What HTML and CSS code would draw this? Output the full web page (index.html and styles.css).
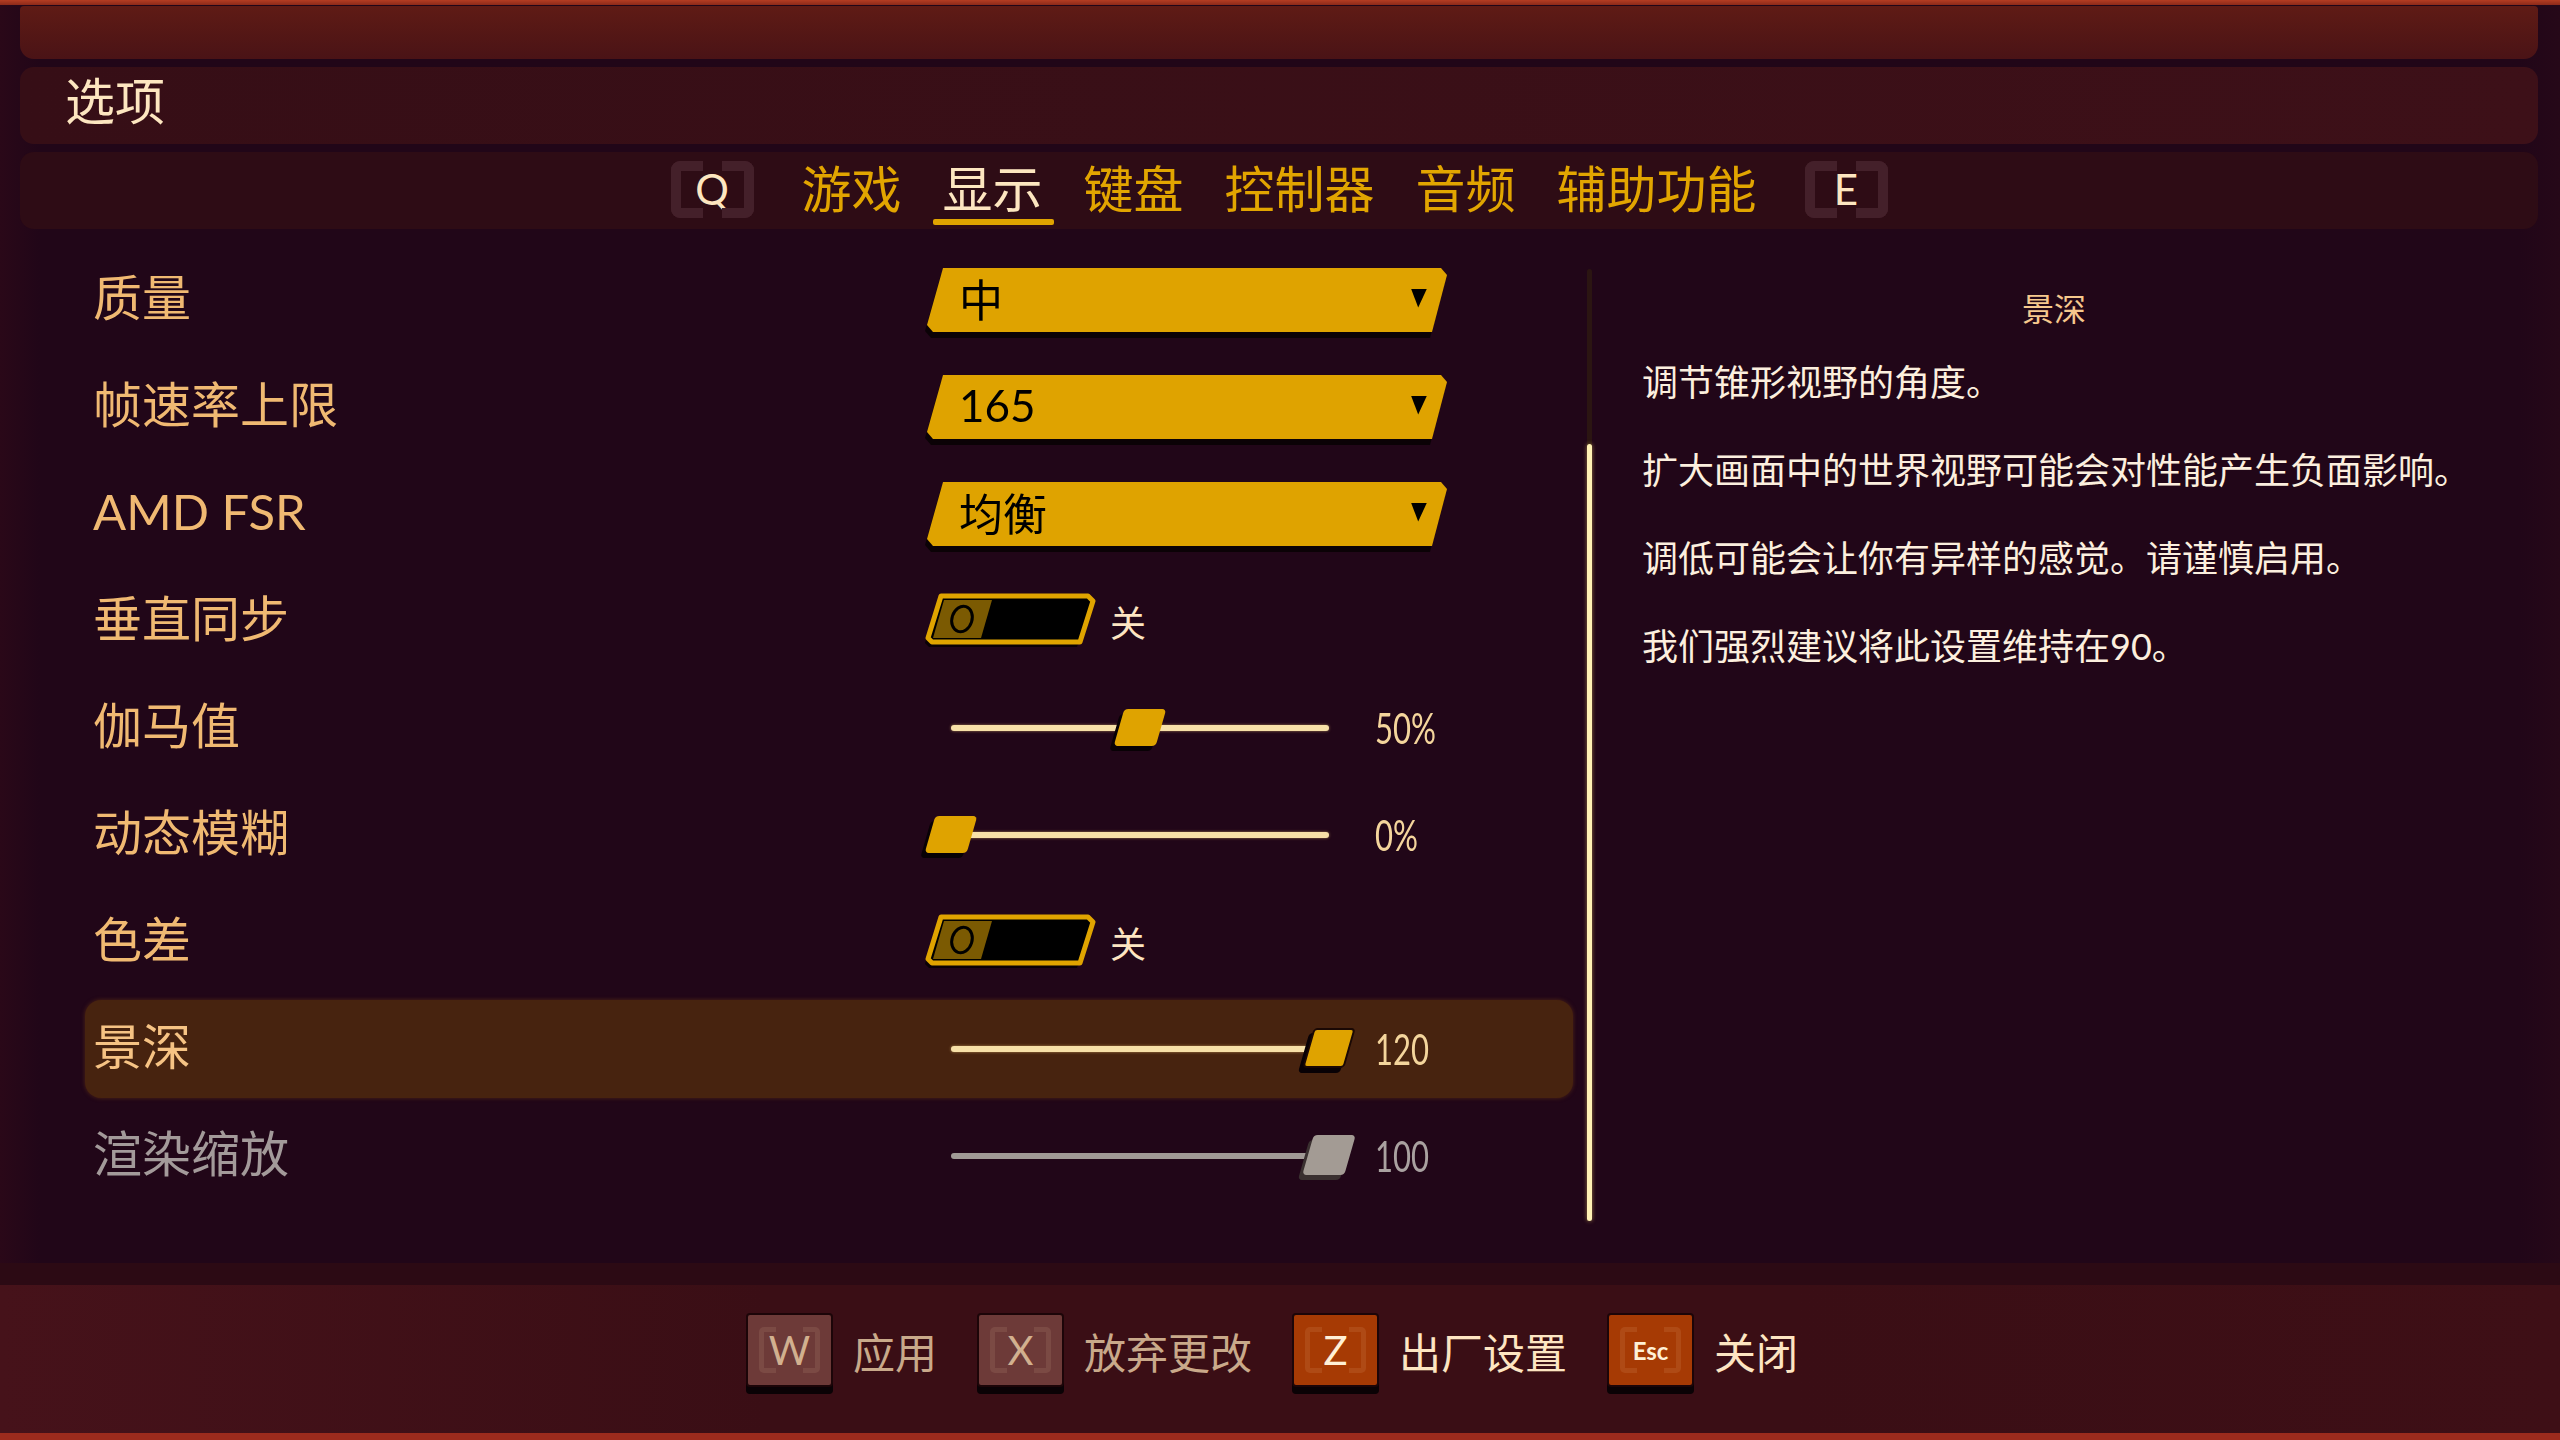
FILE: index.html
```html
<!DOCTYPE html>
<html lang="zh-CN">
<head>
    <meta charset="UTF-8">
    <title>选项</title>
    <link rel="stylesheet" href="styles.css">
</head>
<body>
<div class="screen">
    <div class="top-line"></div>

    <div class="header">
        <div class="banner"></div>
        <div class="title-bar">选项</div>
        <div class="tab-bar">
            <span class="key-hint">Q</span>
            <span class="tab">游戏</span>
            <span class="tab active">显示</span>
            <span class="tab">键盘</span>
            <span class="tab">控制器</span>
            <span class="tab">音频</span>
            <span class="tab">辅助功能</span>
            <span class="key-hint">E</span>
        </div>
    </div>

    <div class="main">
        <div class="settings">
            <div class="row">
                <span class="label">质量</span>
                <div class="dropdown"><div class="dropdown-face"><span>中</span><span class="arrow"></span></div></div>
            </div>
            <div class="row">
                <span class="label">帧速率上限</span>
                <div class="dropdown"><div class="dropdown-face"><span>165</span><span class="arrow"></span></div></div>
            </div>
            <div class="row">
                <span class="label">AMD FSR</span>
                <div class="dropdown"><div class="dropdown-face"><span>均衡</span><span class="arrow"></span></div></div>
            </div>
            <div class="row">
                <span class="label">垂直同步</span>
                <div class="toggle">
                    <svg width="172" height="56" viewBox="0 0 172 56">
                        <polygon points="13,8 160,8 165,13 152,54 4,54 0,50" fill="#0a0105"/>
                        <polygon points="16,3 163,3 168,8 155,49 7,49 3,45" fill="#000" stroke="#e0a400" stroke-width="5" stroke-linejoin="round"/>
                        <polygon points="19,7 67,7 56,45 8,45" fill="#7b5a02"/>
                        <ellipse cx="37" cy="26" rx="10" ry="13" transform="rotate(18 37 26)" fill="none" stroke="#000" stroke-width="3"/>
                    </svg>
                    <span>关</span>
                </div>
            </div>
            <div class="row">
                <span class="label">伽马值</span>
                <div class="slider-wrap">
                    <div class="slider">
                        <div class="slider-track"></div>
                        <div class="slider-knob" style="left: 50%"></div>
                    </div>
                    <span class="value">50%</span>
                </div>
            </div>
            <div class="row">
                <span class="label">动态模糊</span>
                <div class="slider-wrap">
                    <div class="slider">
                        <div class="slider-track"></div>
                        <div class="slider-knob" style="left: 0%"></div>
                    </div>
                    <span class="value">0%</span>
                </div>
            </div>
            <div class="row">
                <span class="label">色差</span>
                <div class="toggle">
                    <svg width="172" height="56" viewBox="0 0 172 56">
                        <polygon points="13,8 160,8 165,13 152,54 4,54 0,50" fill="#0a0105"/>
                        <polygon points="16,3 163,3 168,8 155,49 7,49 3,45" fill="#000" stroke="#e0a400" stroke-width="5" stroke-linejoin="round"/>
                        <polygon points="19,7 67,7 56,45 8,45" fill="#7b5a02"/>
                        <ellipse cx="37" cy="26" rx="10" ry="13" transform="rotate(18 37 26)" fill="none" stroke="#000" stroke-width="3"/>
                    </svg>
                    <span>关</span>
                </div>
            </div>
            <div class="row selected">
                <span class="label">景深</span>
                <div class="slider-wrap">
                    <div class="slider">
                        <div class="slider-track"></div>
                        <div class="slider-knob outlined" style="left: 100%"></div>
                    </div>
                    <span class="value">120</span>
                </div>
            </div>
            <div class="row disabled">
                <span class="label">渲染缩放</span>
                <div class="slider-wrap">
                    <div class="slider">
                        <div class="slider-track"></div>
                        <div class="slider-knob" style="left: 100%"></div>
                    </div>
                    <span class="value">100</span>
                </div>
            </div>
        </div>

        <div class="scrollbar"><div class="scroll-thumb"></div></div>

        <div class="info">
            <h2>景深</h2>
            <p>调节锥形视野的角度。</p>
            <p>扩大画面中的世界视野可能会对性能产生负面影响。</p>
            <p>调低可能会让你有异样的感觉。请谨慎启用。</p>
            <p>我们强烈建议将此设置维持在90。</p>
        </div>
    </div>

    <div class="footer-band"></div>
    <div class="footer">
        <div class="action dim"><span class="key">W</span>应用</div>
        <div class="action dim"><span class="key">X</span>放弃更改</div>
        <div class="action"><span class="key hot">Z</span>出厂设置</div>
        <div class="action"><span class="key hot esc">Esc</span>关闭</div>
    </div>
    <div class="bottom-line"></div>
</div>
</body>
</html>
```

FILE: styles.css
```css
* { margin: 0; padding: 0; box-sizing: border-box; }

body {
    background: #210618;
    font-family: Lato, "Noto Sans CJK SC", sans-serif;
    width: 2560px;
    height: 1440px;
    overflow: hidden;
}

.screen {
    display: flex;
    flex-direction: column;
    height: 1440px;
    background: linear-gradient(90deg, #2a0818 0, #210618 40px, #210618 calc(100% - 40px), #260818 100%);
}

.top-line {
    height: 5px;
    background: linear-gradient(#b43d22, #8c2a1a);
}

/* header panels */
.header {
    display: flex;
    flex-direction: column;
    gap: 8px;
    padding: 1px 22px 0 20px;
}

.banner {
    height: 53px;
    border-radius: 4px 4px 14px 14px;
    background: linear-gradient(180deg, #5f1b15 0%, #4a1316 100%);
}

.title-bar {
    height: 77px;
    border-radius: 14px;
    background: linear-gradient(90deg, #360e16, #3d1018);
    display: flex;
    align-items: center;
    padding: 0 0 15px 45px;
    font-size: 50px;
    color: #fde6c0;
}

.tab-bar {
    height: 77px;
    border-radius: 14px;
    background: #2e0c15;
    display: flex;
    align-items: center;
    justify-content: center;
    gap: 41px;
    padding-bottom: 3px;
}

.tab {
    position: relative;
    font-size: 50px;
    line-height: 50px;
    color: #e2a500;
}

.tab.active { color: #fde6c0; }

.tab.active::after {
    content: "";
    position: absolute;
    left: -10px;
    right: -11px;
    bottom: -11px;
    height: 6px;
    border-radius: 2px;
    background: #e0a400;
}

.key-hint {
    position: relative;
    width: 83px;
    height: 57px;
    margin: 0 7px;
    display: flex;
    align-items: center;
    justify-content: center;
    font-size: 42px;
    color: #fde6c0;
}

.key-hint::before, .key-hint::after {
    content: "";
    position: absolute;
    top: 0;
    bottom: 0;
    width: 22px;
    border: 10px solid #44202a;
}

.key-hint::before { left: 0; border-right: none; border-radius: 9px 0 0 9px; }
.key-hint::after { right: 0; border-left: none; border-radius: 0 9px 9px 0; }

/* settings list */
.main {
    height: 1034px;
    display: flex;
}

.settings {
    margin-left: 85px;
    width: 1488px;
    padding-top: 22px;
    display: flex;
    flex-direction: column;
    gap: 9px;
}

.row {
    height: 98px;
    display: flex;
    align-items: center;
    padding-left: 8px;
    border-radius: 16px;
}

.row.selected {
    background: #47230f;
    box-shadow: 0 0 4px rgba(110, 60, 20, 0.6);
}

.label {
    width: 832px;
    font-size: 49px;
    line-height: 1;
    padding-bottom: 6px;
    color: #f0b972;
}

.row.selected .label { color: #f6c384; }
.row.disabled .label { color: #a39a9a; }

.dropdown {
    width: 520px;
    height: 64px;
    margin-left: 2px;
    filter: drop-shadow(-2px 6px 0 #0b0206);
}

.dropdown-face {
    height: 100%;
    background: #dfa300;
    clip-path: polygon(16px 0, calc(100% - 6px) 0, 100% 7px, calc(100% - 15px) 100%, 6px 100%, 0 calc(100% - 7px));
    display: flex;
    align-items: center;
    justify-content: space-between;
    padding: 0 20px 4px 32px;
    font-size: 44px;
    color: #000;
}

.arrow {
    width: 16px;
    height: 19px;
    background: #000;
    clip-path: polygon(0 0, 100% 0, 45% 100%);
}

.toggle {
    display: flex;
    align-items: center;
    gap: 13px;
    font-size: 36px;
    color: #fde5c2;
}

.slider-wrap {
    display: flex;
    align-items: center;
}

.slider {
    position: relative;
    width: 378px;
    height: 44px;
    margin-left: 26px;
}

.slider-track {
    position: absolute;
    left: 0;
    right: 0;
    top: 19px;
    height: 6px;
    border-radius: 3px;
    background: #f7e0a8;
    box-shadow: 0 0 3px rgba(240, 200, 120, 0.6);
}

.slider-knob {
    position: absolute;
    top: 3px;
    width: 42px;
    height: 37px;
    margin-left: -21px;
    background: #dfa300;
    border-radius: 4px;
    transform: skewX(-16deg);
    box-shadow: -3px 5px 0 #080105;
}

.slider-knob.outlined {
    top: 1px;
    height: 40px;
    border: 2px solid #1a0804;
}

.row.disabled .slider-track { background: #a19a96; box-shadow: none; }
.row.disabled .slider-knob { top: 1px; height: 40px; background: #a39b94; box-shadow: -3px 5px 0 #3a3030; }

.value {
    display: inline-block;
    margin-left: 46px;
    font-size: 42px;
    color: #f4d59c;
    transform: scaleX(0.74);
    transform-origin: left center;
}

.row.disabled .value { color: #a9a1a0; }

/* scrollbar + description */
.scrollbar {
    margin: 40px 0 0 14px;
    width: 5px;
    height: 952px;
    border-radius: 3px;
    background: #2b1512;
    display: flex;
    flex-direction: column;
    justify-content: flex-end;
}

.scroll-thumb {
    height: 777px;
    border-radius: 3px;
    background: #fff1b4;
    box-shadow: 0 0 4px rgba(230, 190, 100, 0.6);
}

.info {
    width: 924px;
    padding-top: 60px;
}

.info h2 {
    font-size: 32px;
    font-weight: normal;
    line-height: 40px;
    text-align: center;
    color: #f6c88d;
    margin-bottom: 9px;
}

.info p {
    font-size: 36px;
    line-height: 88px;
    padding-left: 50px;
    color: #fcefde;
}

/* footer */
.footer-band {
    height: 22px;
    background: #2c0a14;
}

.footer {
    height: 148px;
    background: linear-gradient(90deg, #46121a, #3a0e15 30%, #3a0e15 70%, #3e0f16);
    display: flex;
    justify-content: center;
    align-items: center;
    gap: 40px;
    padding: 0 16px 18px 0;
}

.bottom-line {
    height: 7px;
    background: #9c2b1d;
}

.action {
    display: flex;
    align-items: center;
    gap: 20px;
    font-size: 42px;
    color: #fde5c2;
}

.action.dim { color: #c9a98a; }

.key {
    position: relative;
    width: 87px;
    height: 74px;
    display: flex;
    align-items: center;
    justify-content: center;
    background: #6d3a38;
    border: 2px solid #1c0508;
    border-radius: 4px;
    box-shadow: 0 7px 0 #0a0205;
    font-size: 40px;
    color: #d2b08f;
}

.key::before, .key::after {
    content: "";
    position: absolute;
    top: 12px;
    bottom: 12px;
    width: 12px;
    border: 5px solid rgba(255, 210, 180, 0.1);
}

.key::before { left: 11px; border-right: none; border-radius: 5px 0 0 5px; }
.key::after { right: 11px; border-left: none; border-radius: 0 5px 5px 0; }

.key.hot {
    background: #a63a04;
    color: #fff0d6;
}

.key.esc {
    font-size: 24px;
    font-weight: bold;
}
```
